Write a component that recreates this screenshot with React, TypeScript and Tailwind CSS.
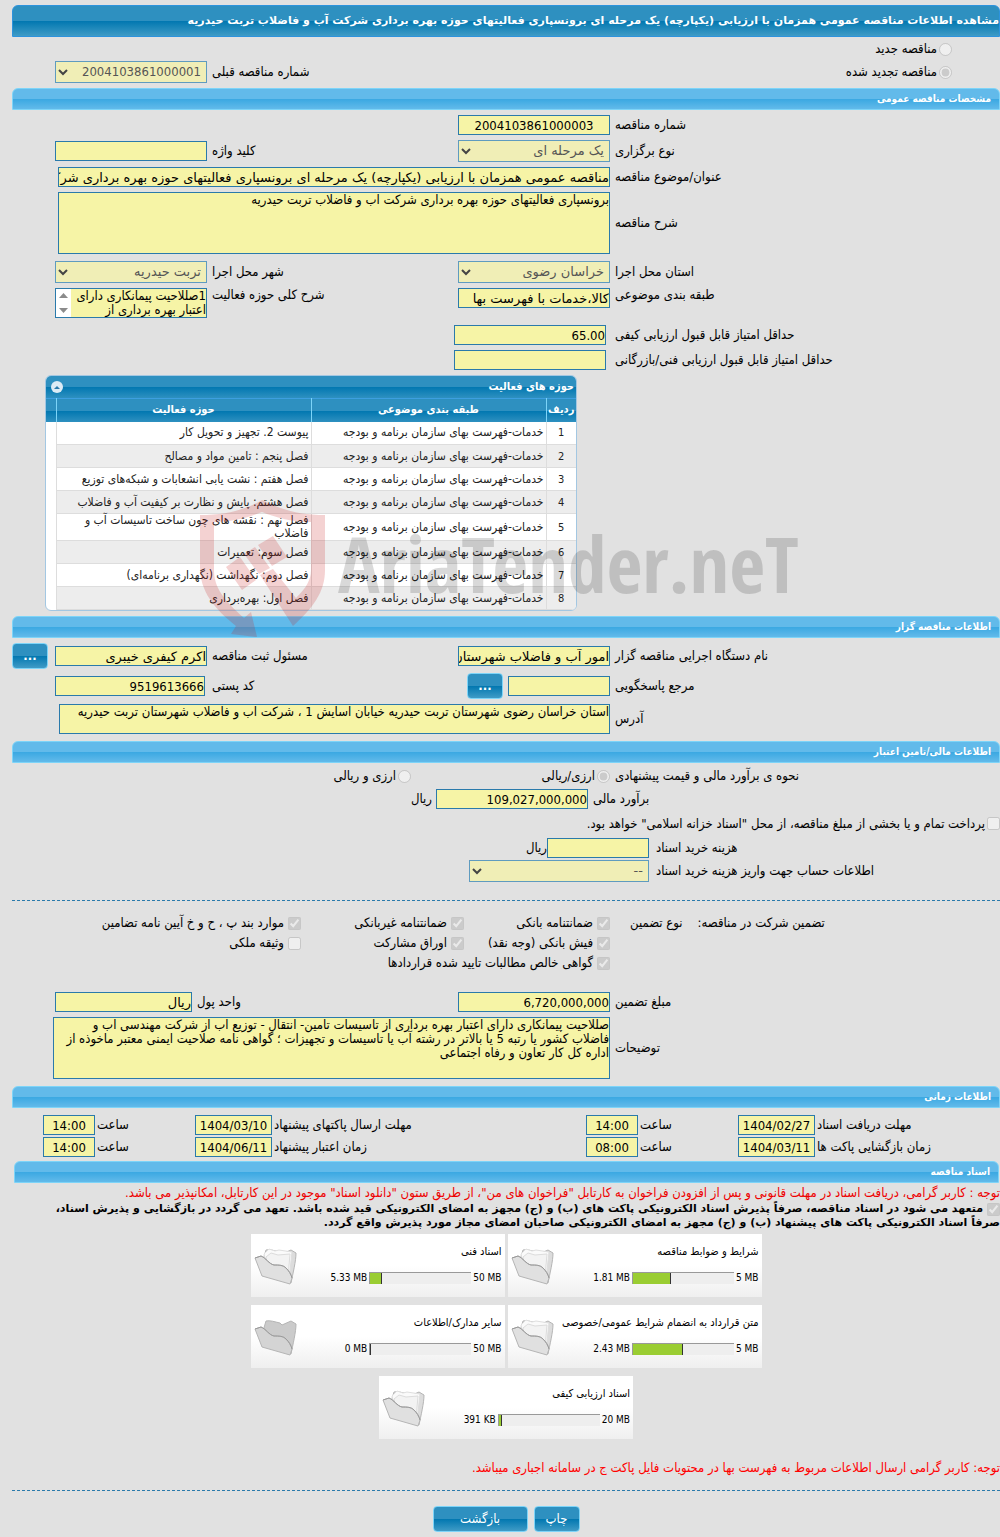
import type { ReactNode } from "react";
import clsx from "clsx";

type Activity = { category: string; title: string };
type Folder = { name: string; used: string; max: string; percent: number; empty?: boolean };

const CATEGORY = "خدمات-فهرست بهای سازمان برنامه و بودجه";

const activities: Activity[] = [
  { category: CATEGORY, title: "پیوست 2. تجهیز و تحویل کار" },
  { category: CATEGORY, title: "فصل پنجم : تامین مواد و مصالح" },
  { category: CATEGORY, title: "فصل هفتم : نشت یابی انشعابات و شبکه‌های توزیع" },
  { category: CATEGORY, title: "فصل هشتم: پایش و نظارت بر کیفیت آب و فاضلاب" },
  { category: CATEGORY, title: "فصل نهم : نقشه های چون ساخت  تاسیسات آب و فاضلاب" },
  { category: CATEGORY, title: "فصل سوم: تعمیرات" },
  { category: CATEGORY, title: "فصل دوم: نگهداشت (نگهداری برنامه‌ای)" },
  { category: CATEGORY, title: "فصل اول: بهره‌برداری" },
];

const folders: Folder[] = [
  { name: "شرایط و ضوابط مناقصه", used: "1.81 MB", max: "5 MB", percent: 38 },
  { name: "اسناد فنی", used: "5.33 MB", max: "50 MB", percent: 12 },
  { name: "متن قرارداد به انضمام شرایط عمومی/خصوصی", used: "2.43 MB", max: "5 MB", percent: 50 },
  { name: "سایر مدارک/اطلاعات", used: "0 MB", max: "50 MB", percent: 1, empty: true },
  { name: "اسناد ارزیابی کیفی", used: "391 KB", max: "20 MB", percent: 3 },
];

const FORM_GRID = "grid grid-cols-[390fr_152px_251fr_152px_43px] items-center";
const BOX = "rounded-none border border-[#2a7aab] bg-[#f6f4a6] text-black outline-none";
const WIDE_FONT = "font-['DejaVu_Sans',sans-serif]";

// digits only: dates, amounts, reference numbers
const isNumeric = (value: string) => /^[\d.,:/]*$/.test(value);

export default function App() {
  return (
    <div
      dir="rtl"
      lang="fa"
      className="overflow-x-hidden bg-[#e1e1e1] pt-[5px] pb-[5px] pl-3 font-['DejaVu_Sans_Condensed','DejaVu_Sans',sans-serif] text-[13px] leading-[14px] text-black"
    >
      <h1
        className={clsx(
          WIDE_FONT,
          "flex h-8 items-center rounded-t-md border border-[#2d93dd] bg-[linear-gradient(#2e90c0_50%,#0177b0_50%,#3f9bc6)] text-[11px] font-bold whitespace-nowrap text-white"
        )}
      >
        مشاهده اطلاعات مناقصه عمومی همزمان با ارزیابی (یکپارچه) یک مرحله ای برونسپاری فعالیتهای حوزه بهره برداری شرکت آب و فاضلاب تربت حیدریه
      </h1>

      <div className="flex h-6 items-center pr-12">
        <Option type="radio" name="kind" label="مناقصه جدید" />
      </div>
      <div className={clsx(FORM_GRID, "h-[22px]")}>
        <div className="pr-12">
          <Option type="radio" name="kind" label="مناقصه تجدید شده" checked />
        </div>
        <span />
        <Label htmlFor="prev">شماره مناقصه قبلی</Label>
        <Select id="prev" value="2004103861000001" />
      </div>

      <Section title="مشخصات مناقصه عمومی" className="mt-[5px]" />
      <div className="mt-[5px] flex flex-col gap-[5px]">
        <div className={FORM_GRID}>
          <Label htmlFor="number">شماره مناقصه</Label>
          <Input id="number" value="2004103861000003" center />
        </div>
        <div className={FORM_GRID}>
          <Label htmlFor="method">نوع برگزاری</Label>
          <Select id="method" value="یک مرحله ای" />
          <Label htmlFor="keyword">کلید واژه</Label>
          <Input id="keyword" value="" />
        </div>
        <div className={FORM_GRID}>
          <Label htmlFor="subject">عنوان/موضوع مناقصه</Label>
          <div className="col-span-3 flex pl-[3px]">
            <Input
              id="subject"
              value="مناقصه عمومی همزمان با ارزیابی (یکپارچه) یک مرحله ای برونسپاری فعالیتهای حوزه بهره برداری شرکت آب و فاضلاب تربت حیدریه"
            />
          </div>
        </div>
        <div className={FORM_GRID}>
          <Label htmlFor="desc">شرح مناقصه</Label>
          <div className="col-span-3 flex pl-[3px]">
            <Area id="desc" value="برونسپاری فعالیتهای حوزه بهره برداری شرکت آب و فاضلاب تربت حیدریه" className="h-[62px]" />
          </div>
        </div>
        <div className={clsx(FORM_GRID, "mt-0.5")}>
          <Label htmlFor="province">استان محل اجرا</Label>
          <Select id="province" value="خراسان رضوی" />
          <Label htmlFor="city">شهر محل اجرا</Label>
          <Select id="city" value="تربت حیدریه" />
        </div>
        <div className="grid grid-cols-[390fr_152px_251fr_152px_43px] items-start">
          <Label htmlFor="class">طبقه بندی موضوعی</Label>
          <Input id="class" value="کالا،خدمات با فهرست بها" />
          <Label htmlFor="scope">شرح کلی حوزه فعالیت</Label>
          <div className="flex h-[30px] border border-[#2a7aab] bg-[#f6f4a6]">
            <textarea
              id="scope"
              readOnly
              defaultValue="1صللاحیت پیمانکاری دارای اعتبار بهره برداری از"
              className="min-w-0 flex-1 resize-none overflow-hidden outline-none"
            />
            <div className="flex w-[15px] flex-col items-center justify-between bg-white py-1">
              <svg width="9" height="5" viewBox="0 0 9 5" fill="#8b8b8b"><path d="M0 5 4.500 0 9 5z" /></svg>
              <svg width="9" height="5" viewBox="0 0 9 5" fill="#8b8b8b"><path d="M0 0 4.500 5 9 0z" /></svg>
            </div>
          </div>
        </div>
        <div className="mt-0.5 grid grid-cols-[390fr_156px_442fr] items-center">
          <Label htmlFor="minq">حداقل امتیاز قابل قبول ارزیابی کیفی</Label>
          <div className="flex pr-1"><Input id="minq" value="65.00" /></div>
        </div>
        <div className="grid grid-cols-[390fr_156px_442fr] items-center">
          <Label htmlFor="mint">حداقل امتیاز قابل قبول ارزیابی فنی/بازرگانی</Label>
          <div className="flex pr-1"><Input id="mint" value="" /></div>
        </div>
      </div>

      <div className="relative mt-[5px] flex justify-end pl-[33px]">
        <ActivityTable />
        <Watermark />
      </div>

      <Section title="اطلاعات مناقصه گزار" className="mt-[5px]" />
      <div className="mt-[5px] flex flex-col gap-1">
        <div className={FORM_GRID}>
          <Label htmlFor="org">نام دستگاه اجرایی مناقصه گزار</Label>
          <Input id="org" value="امور آب و فاضلاب شهرستان تربت حیدریه" />
          <Label htmlFor="officer">مسئول ثبت مناقصه</Label>
          <Input id="officer" value="اکرم کیفری خیبری" />
          <div className="flex justify-end"><Button className="w-9 font-bold">...</Button></div>
        </div>
        <div className={FORM_GRID}>
          <Label htmlFor="ref">مرجع پاسخگویی</Label>
          <div className="flex items-center gap-[5px]">
            <div className="flex w-[102px]"><Input id="ref" value="" /></div>
            <Button className="w-9 font-bold">...</Button>
          </div>
          <Label htmlFor="zip">کد پستی</Label>
          <div className="flex pr-0.5"><Input id="zip" value="9519613666" /></div>
        </div>
        <div className={clsx(FORM_GRID, "mt-px")}>
          <Label htmlFor="address">آدرس</Label>
          <div className="col-span-3 flex pl-1">
            <Area
              id="address"
              value="استان خراسان رضوی شهرستان تربت حیدریه خیابان آسایش 1 ، شرکت آب و فاضلاب شهرستان تربت حیدریه"
              className="h-[30px]"
            />
          </div>
        </div>
      </div>

      <Section title="اطلاعات مالی/تامین اعتبار" className="mt-[7px]" />
      <div className="grid h-[26px] grid-cols-[390fr_598fr] items-center">
        <Label>نحوه ی برآورد مالی و قیمت پیشنهادی</Label>
        <div className="flex">
          <div className="w-[199px]"><Option type="radio" name="currency" label="ارزی/ریالی" checked /></div>
          <Option type="radio" name="currency" label="ارزی و ریالی" />
        </div>
      </div>
      <div className="grid grid-cols-[412fr_576fr] items-center">
        <Label htmlFor="estimate">برآورد مالی</Label>
        <div className="flex items-center gap-1">
          <div className="flex w-[152px]"><Input id="estimate" value="109,027,000,000" /></div>
          <span>ریال</span>
        </div>
      </div>
      <div className="flex h-[29px] items-center">
        <Option type="checkbox" label={'پرداخت تمام و یا بخشی از مبلغ مناقصه، از محل "اسناد خزانه اسلامی" خواهد بود.'} />
      </div>
      <div className="grid grid-cols-[351fr_637fr] items-center gap-y-0.5">
        <Label htmlFor="fee" wide>هزینه خرید اسناد</Label>
        <div className="flex items-center">
          <div className="flex w-[102px]"><Input id="fee" value="" /></div>
          <span>ریال</span>
        </div>
        <Label htmlFor="account" wide>اطلاعات حساب جهت واریز هزینه خرید اسناد</Label>
        <div className="flex w-[180px]"><Select id="account" value="--" /></div>
      </div>

      <hr className="mt-[18px] border-t border-dashed border-[#2a7aab]" />

      <div className="mt-3 grid grid-cols-[390fr_146fr_163fr_289fr] whitespace-nowrap">
        <div className="flex h-5 items-center justify-end gap-[15px] pl-5">
          <span>تضمین شرکت در مناقصه:</span>
          <span>نوع تضمین</span>
        </div>
        <Option type="checkbox" label="ضمانتنامه بانکی" checked gap />
        <Option type="checkbox" label="ضمانتنامه غیربانکی" checked gap />
        <Option type="checkbox" label="موارد بند پ ، ح و خ آیین نامه تضامین" checked gap />
        <span className="h-5" />
        <Option type="checkbox" label="فیش بانکی (وجه نقد)" checked gap />
        <Option type="checkbox" label="اوراق مشارکت" checked gap />
        <Option type="checkbox" label="وثیقه ملکی" gap />
        <span className="h-5" />
        <div className="col-span-3 flex">
          <Option type="checkbox" label="گواهی خالص مطالبات تایید شده قراردادها" checked gap />
        </div>
      </div>

      <div className="mt-[19px] flex flex-col gap-[5px]">
        <div className={FORM_GRID}>
          <Label htmlFor="bond">مبلغ تضمین</Label>
          <Input id="bond" value="6,720,000,000" />
          <div className="col-span-2 grid grid-cols-[266fr_137px] items-center">
            <Label htmlFor="unit">واحد پول</Label>
            <Input id="unit" value="ریال" />
          </div>
        </div>
        <div className="grid grid-cols-[390fr_557fr_41px] items-center">
          <Label htmlFor="notes">توضیحات</Label>
          <Area
            id="notes"
            value="صللاحیت پیمانکاری دارای اعتبار بهره برداری از تاسیسات تامین- انتقال - توزیع آب از شرکت مهندسی آب و فاضلاب کشور یا رتبه 5 یا بالاتر در رشته آب یا تاسیسات و تجهیزات ؛ گواهی نامه صلاحیت ایمنی معتبر ماخوذه از اداره کل کار تعاون و رفاه اجتماعی"
            className="h-[62px]"
          />
        </div>
      </div>

      <Section title="اطلاعات زمانی" className="mt-[7px]" />
      <div className="mt-[7px] flex flex-col gap-0.5">
        <Deadline
          id="docs"
          labels={["مهلت دریافت اسناد", "مهلت ارسال پاکتهای پیشنهاد"]}
          dates={["1404/02/27", "1404/03/10"]}
          times={["14:00", "14:00"]}
        />
        <Deadline
          id="open"
          labels={["زمان بازگشایی پاکت ها", "زمان اعتبار پیشنهاد"]}
          dates={["1404/03/11", "1404/06/11"]}
          times={["08:00", "14:00"]}
        />
      </div>

      <Section title="اسناد مناقصه" className="mt-1 mr-px ml-0.5" />
      <p className="mt-[3px] text-[#e00]">
        توجه : کاربر گرامی، دریافت اسناد در مهلت قانونی و پس از افزودن فراخوان به کارتابل "فراخوان های من"، از طریق ستون "دانلود اسناد" موجود در این کارتابل، امکانپذیر می باشد.
      </p>
      <label className={clsx(WIDE_FONT, "mt-0.5 block text-[11px] font-bold")}>
        <input type="checkbox" disabled checked readOnly className="ml-1 size-[13px] align-middle" />
        متعهد می شود در اسناد مناقصه، صرفاً پذیرش اسناد الکترونیکی پاکت های (ب) و (ج) مجهز به امضای الکترونیکی قید شده باشد. تعهد می گردد در بازگشایی و پذیرش اسناد،
        <br />
        صرفاً اسناد الکترونیکی پاکت های پیشنهاد (ب) و (ج) مجهز به امضای الکترونیکی صاحبان امضای مجاز مورد پذیرش واقع گردد.
      </label>

      <div className="mx-auto mt-1 flex max-w-[520px] flex-wrap justify-center gap-x-[3px] gap-y-2">
        {folders.map((f) => (
          <FolderCard key={f.name} folder={f} />
        ))}
      </div>

      <p className="mt-[22px] text-[#f00]">
        توجه: کاربر گرامی ارسال اطلاعات مربوط به فهرست بها در محتویات فایل پاکت ج در سامانه اجباری میباشد.
      </p>
      <hr className="mt-[15px] border-t border-dashed border-[#2a7aab]" />
      <div className="mt-[15px] flex justify-center gap-1.5">
        <Button className="w-[46px]">چاپ</Button>
        <Button className="w-[95px]">بازگشت</Button>
      </div>
    </div>
  );
}

function Section({ title, className }: { title: string; className?: string }) {
  return (
    <h2
      className={clsx(
        "flex h-[22px] items-center rounded-t-md border border-[#7dd4f8] bg-[linear-gradient(#62baea_50%,#3aa8e2_50%,#62baea)] pr-2 text-[10px] font-bold text-white",
        className
      )}
    >
      {title}
    </h2>
  );
}

function Label({ htmlFor, wide, children }: { htmlFor?: string; wide?: boolean; children: ReactNode }) {
  return (
    <label htmlFor={htmlFor} className={clsx("block text-left whitespace-nowrap", wide ? "pl-[7px]" : "pl-[5px]")}>
      {children}
    </label>
  );
}

function Input({ id, value, center }: { id: string; value: string; center?: boolean }) {
  return (
    <input
      id={id}
      type="text"
      readOnly
      defaultValue={value}
      className={clsx(BOX, "h-5 w-full min-w-0", center && "text-center", !isNumeric(value) && WIDE_FONT)}
    />
  );
}

function Area({ id, value, className }: { id: string; value: string; className: string }) {
  return (
    <textarea id={id} readOnly defaultValue={value} className={clsx(BOX, "w-full resize-none overflow-hidden", className)} />
  );
}

function Select({ id, value }: { id: string; value: string }) {
  return (
    <div className="relative w-full">
      <select
        id={id}
        disabled
        className={clsx(
          "block h-[22px] w-full appearance-none border border-[#5f9bbf] bg-[#f0eeb6] pr-[5px] pl-5 text-[#555]",
          !isNumeric(value) && WIDE_FONT
        )}
      >
        <option>{value}</option>
      </select>
      <svg className="absolute top-2 left-[3px]" width="10" height="7" viewBox="0 0 10 7" fill="none" stroke="#444" strokeWidth="2">
        <path d="M1 1l4 4 4-4" />
      </svg>
    </div>
  );
}

type OptionProps = {
  type: "radio" | "checkbox";
  name?: string;
  label: string;
  checked?: boolean;
  gap?: boolean;
};

function Option({ type, name, label, checked, gap }: OptionProps) {
  return (
    <label className={clsx("flex items-center whitespace-nowrap", gap ? "gap-1" : "gap-0.5")}>
      <input type={type} name={name} disabled defaultChecked={checked} className="size-[13px] shrink-0" />
      {label}
    </label>
  );
}

function Button({ className, children }: { className: string; children: ReactNode }) {
  return (
    <button
      type="button"
      className={clsx(
        "h-[26px] rounded-[4px] border border-[#7dd4f8] bg-[linear-gradient(#2e90c0_50%,#0177b0_50%,#3f9bc6)] text-white",
        className
      )}
    >
      {children}
    </button>
  );
}

function ActivityTable() {
  return (
    <div className="w-[532px] overflow-hidden rounded-md border border-[#a3c7e2] bg-white">
      <div className="flex h-[22px] items-center justify-between bg-[linear-gradient(#2e90c0_50%,#0177b0_50%,#2e90c0)] pr-0.5 pl-[5px] text-[11px] font-bold text-white">
        <h3>حوزه های فعالیت</h3>
        <button type="button" aria-label="بستن" className="flex size-3 items-center justify-center rounded-full bg-[#dcebf5]">
          <svg width="6" height="3" viewBox="0 0 6 3" fill="#2a7aab"><path d="M0 3 3 0l3 3z" /></svg>
        </button>
      </div>
      <table className="w-full table-fixed border-collapse">
        <colgroup>
          <col className="w-[30px]" />
          <col className="w-[235px]" />
          <col className="w-[255px]" />
          <col />
        </colgroup>
        <thead>
          <tr className="h-[23px] border-t border-[#3d9fe0] bg-[linear-gradient(#2e90c0_50%,#0177b0_50%,#2e90c0)] text-[11px] text-white">
            <th className="border-l border-[#7dd4f8]">ردیف</th>
            <th className="border-l border-[#7dd4f8]">طبقه بندی موضوعی</th>
            <th className="border-l border-[#7dd4f8]">حوزه فعالیت</th>
            <th />
          </tr>
        </thead>
        <tbody className="text-[12px] leading-[13px] text-[#222]">
          {activities.map((a, i) => (
            <tr key={a.title} className="h-[23px]">
              <td className={clsx("border-b border-l border-[#ddd] text-center text-[11px]", i % 2 && "bg-[#ededed]")}>{i + 1}</td>
              <td className={clsx("border-b border-l border-[#ddd] pr-0.5", i % 2 && "bg-[#ededed]")}>{a.category}</td>
              <td className={clsx("border-b border-l border-[#ddd] pr-0.5", i % 2 && "bg-[#ededed]")}>{a.title}</td>
              <td />
            </tr>
          ))}
        </tbody>
      </table>
    </div>
  );
}

function Watermark() {
  return (
    <div dir="ltr" className="pointer-events-none absolute top-[125px] left-[188px] z-10 flex gap-3">
      <svg width="126" height="138" viewBox="0 0 126 138" fill="#c81e1e" fillOpacity="0.2">
        <path d="M0 15C28 15 46 9 62 0c18 9 36 15 63 15v55c0 22-12 38-32 56L60 75l13-6 23 29c10-10 15-18 15-28V22c-19 0-34-4-49-10-15 6-30 10-48 10v48c0 18 10 30 30 48l7-6 6 25-26-3 5-8C15 109 0 92 0 67z" />
        <path d="M58 45l15-9 14 21-15 9zM44 54l11-7 15 21-11 6zM26 67l14-10 16 23-14 10z" />
      </svg>
      <span className="mt-2 font-['Open_Sans_Condensed','Roboto_Condensed','Liberation_Sans_Narrow','Liberation_Sans',sans-serif] text-[78px] leading-[110px] font-bold text-black/15">
        AriaTender.neT
      </span>
    </div>
  );
}

type DeadlineProps = { id: string; labels: string[]; dates: string[]; times: string[] };

function Deadline({ id, labels, dates, times }: DeadlineProps) {
  return (
    <div className="grid grid-cols-[185fr_77px_100fr_52px_314fr_77px_100fr_52px_31px] items-center">
      {labels.map((label, i) => (
        <div key={label} className="contents">
          <label htmlFor={`${id}-date-${i}`} className="pl-0.5 text-left whitespace-nowrap">{label}</label>
          <Input id={`${id}-date-${i}`} value={dates[i]} center />
          <label htmlFor={`${id}-time-${i}`} className="pl-0.5 text-left whitespace-nowrap">ساعت</label>
          <Input id={`${id}-time-${i}`} value={times[i]} center />
        </div>
      ))}
    </div>
  );
}

function FolderCard({ folder }: { folder: Folder }) {
  return (
    <article className="flex h-[63px] w-[254px] flex-row-reverse bg-linear-to-b from-white from-50% to-[#efefef] pr-[3px] pl-[3px]">
      <FolderIcon empty={folder.empty} />
      <div className="flex flex-1 flex-col pt-[11px] text-[10px]">
        <h3 className="text-[11px] whitespace-nowrap">{folder.name}</h3>
        <div dir="ltr" className="mt-3 flex items-center justify-end gap-0.5">
          <span>{folder.used}</span>
          <div className="h-3 w-[102px] border-t border-l border-[#999] bg-[#eee]">
            <div className="h-full border-r border-[#333] bg-[#9acd32]" style={{ width: `${folder.percent}%` }} />
          </div>
          <span>{folder.max}</span>
        </div>
      </div>
    </article>
  );
}

function FolderIcon({ empty }: { empty?: boolean }) {
  return (
    <svg className="mt-3 shrink-0" width="44" height="42" viewBox="0 0 44 42" stroke="#b5b5b5" strokeLinejoin="round">
      <path d="M9 14l3-10c4-1 9 1 14 2l2 2 9-4 5 3c0 8-3 20-5 30z" fill={empty ? "#cbcbcb" : "#dcdcdc"} />
      {!empty && (
        <>
          <path d="M10 8l5-5 6 2 4-1 13 2-3 27-22-12z" fill="#fafafa" stroke="#dedede" />
          <path d="M12 11l5-4 7 2 12-1-2 23-20-10z" fill="#f3f3f3" stroke="#dcdcdc" />
        </>
      )}
      <path d="M1 12l6-2c5 2 8 8 13 9 5 0 9 0 12 3 3 3 5 6 6 10l-2 6L8 30z" fill={empty ? "#d4d4d4" : "#e0e0e0"} />
      <path d="M1 12l6-2c5 2 8 8 13 9 5 0 9 0 12 3 3 3 5 6 6 10" fill="none" stroke="#9a9a9a" />
    </svg>
  );
}
